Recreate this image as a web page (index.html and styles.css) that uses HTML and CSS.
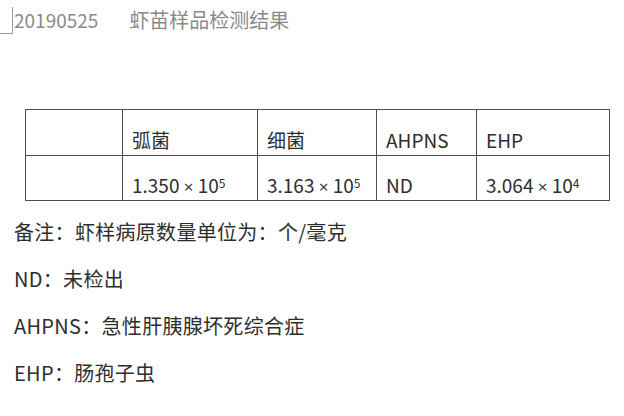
FILE: index.html
```html
<!DOCTYPE html>
<html lang="zh-CN">
<head>
<meta charset="utf-8">
<title>20190525 虾苗样品检测结果</title>
<link rel="stylesheet" href="styles.css">
</head>
<body>
<div class="page">
  <header class="title-row">
    <span class="corner-mark"></span>
    <span class="date">20190525</span>
    <span class="title">虾苗样品检测结果</span>
  </header>

  <table class="results">
    <colgroup>
      <col class="c0"><col class="c1"><col class="c2"><col class="c3"><col class="c4">
    </colgroup>
    <tr class="head">
      <td></td>
      <td>弧菌</td>
      <td>细菌</td>
      <td>AHPNS</td>
      <td>EHP</td>
    </tr>
    <tr class="vals">
      <td></td>
      <td>1.350 <span class="times">×</span> 10<sup>5</sup></td>
      <td>3.163 <span class="times">×</span> 10<sup>5</sup></td>
      <td>ND</td>
      <td>3.064 <span class="times">×</span> 10<sup>4</sup></td>
    </tr>
  </table>

  <ul class="notes">
    <li>备注：虾样病原数量单位为：个/毫克</li>
    <li>ND：未检出</li>
    <li>AHPNS：急性肝胰腺坏死综合症</li>
    <li>EHP：肠孢子虫</li>
  </ul>
</div>
</body>
</html>
```
FILE: styles.css
```css
html, body {
  margin: 0;
  padding: 0;
  background: #ffffff;
}

.page {
  width: 624px;
  height: 416px;
  overflow: hidden;
  font-family: "Noto Sans CJK SC", "Noto Sans", sans-serif;
  color: #2e2e2e;
}

.title-row {
  display: flex;
  align-items: flex-start;
  height: 40px;
}

.corner-mark {
  display: block;
  width: 12px;
  height: 26px;
  margin-top: 7px;
  border-right: 1px solid #9a9a9a;
  border-bottom: 1px solid #9a9a9a;
  flex: none;
}

.date {
  margin-left: 1px;
  font-size: 19px;
  line-height: 26px;
  margin-top: 7px;
  color: #8a8a8a;
}

.title {
  margin-left: 31px;
  font-size: 20px;
  line-height: 26px;
  margin-top: 7px;
  color: #8a8a8a;
}

.results {
  margin: 69px 0 0 25px;
  width: 584px;
  border-collapse: collapse;
  table-layout: fixed;
  font-size: 19px;
}

.results .c0 { width: 97px; }
.results .c1 { width: 135px; }
.results .c2 { width: 119px; }
.results .c3 { width: 100px; }
.results .c4 { width: 133px; }

.results td {
  border: 1.5px solid #4e4e4e;
  padding: 0 0 3px 9px;
  vertical-align: bottom;
  line-height: 24px;
  white-space: nowrap;
}

.results .head td { height: 46px; box-sizing: border-box; }
.results .vals td { height: 45px; box-sizing: border-box; }

.results .times {
  font-family: "Open Sans", sans-serif;
  font-size: 17px;
  line-height: 0;
}

.results sup {
  font-size: 12px;
  vertical-align: 5px;
  line-height: 0;
}

.notes {
  list-style: none;
  margin: 18px 0 0 14px;
  padding: 0;
  display: flex;
  flex-direction: column;
  gap: 21px;
  font-size: 20px;
  line-height: 26px;
  letter-spacing: 0.3px;
}
```
